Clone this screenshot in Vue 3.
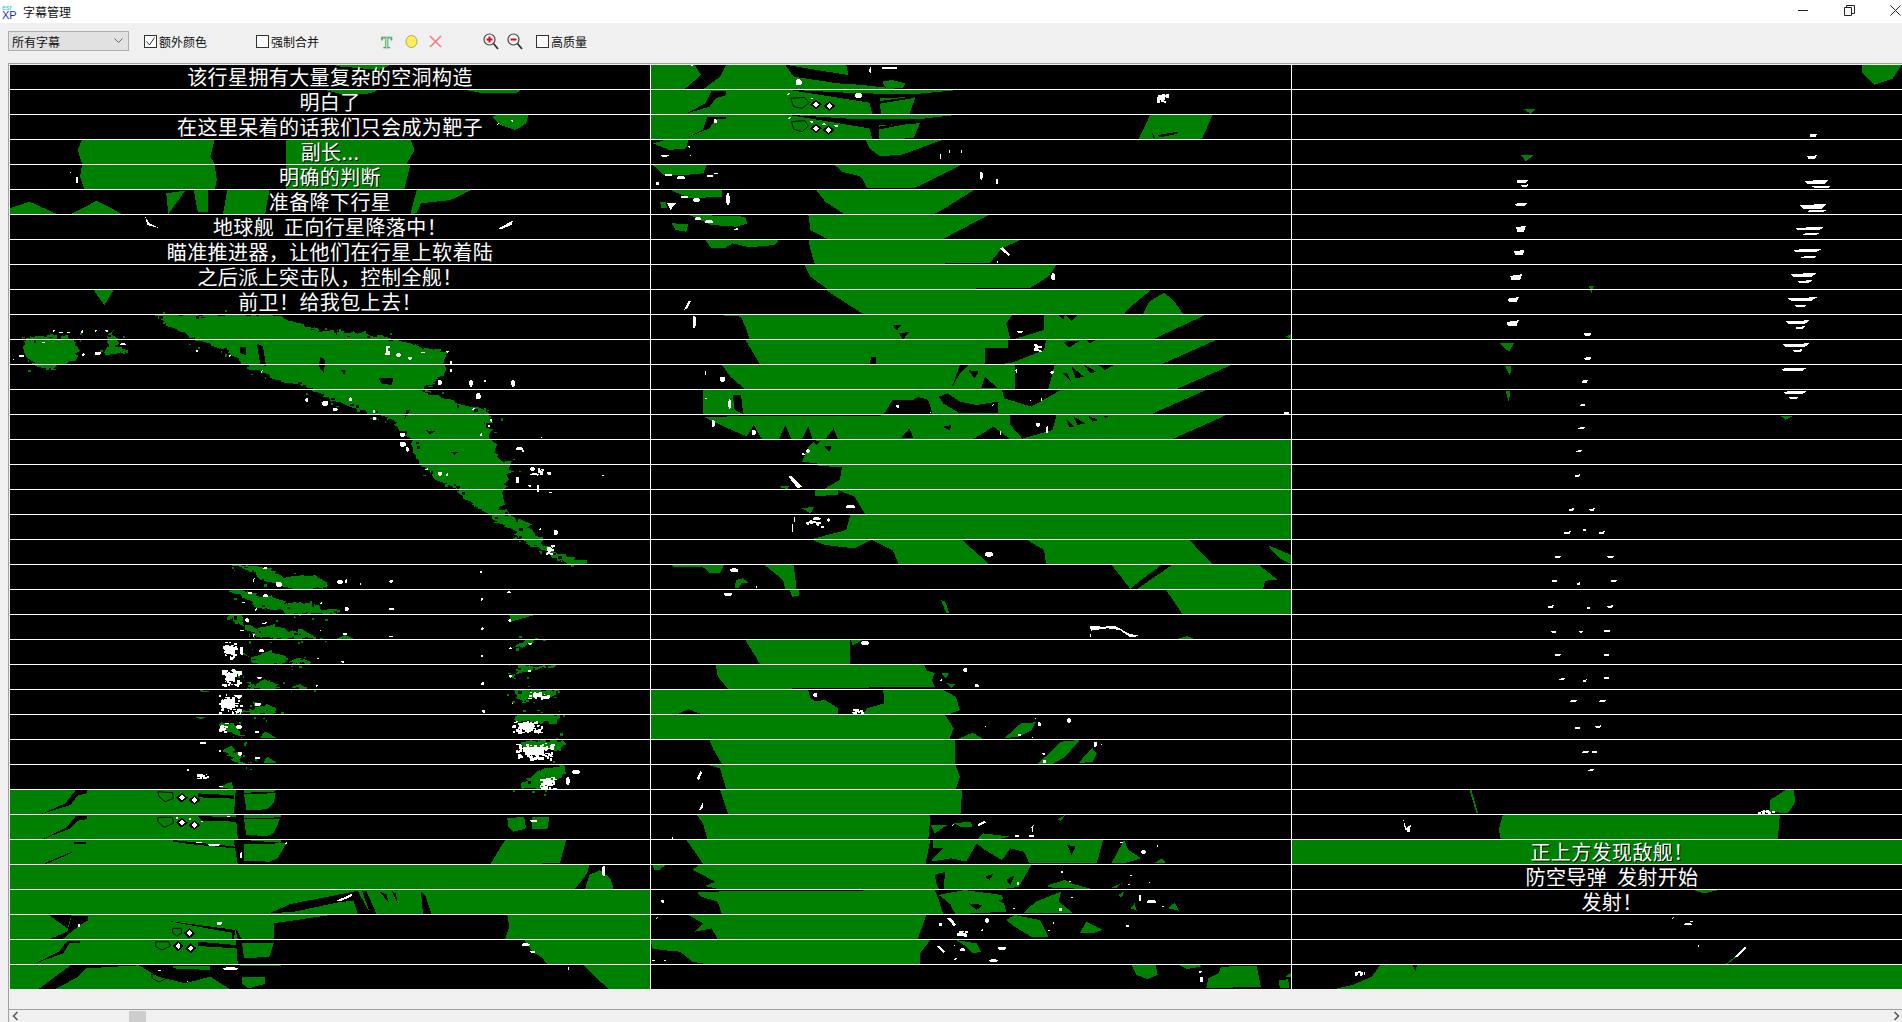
<script setup>
// every strip picture is traced from crops, so each block keeps the crop's own units
const SX = 660 / 1568
const SY = 1 / 3

const subtitles = {
  '0-0': '该行星拥有大量复杂的空洞构造',
  '0-1': '明白了',
  '0-2': '在这里呆着的话我们只会成为靶子',
  '0-3': '副长...',
  '0-4': '明确的判断',
  '0-5': '准备降下行星',
  '0-6': '地球舰  正向行星降落中！',
  '0-7': '瞄准推进器，让他们在行星上软着陆',
  '0-8': '之后派上突击队，控制全舰！',
  '0-9': '前卫！给我包上去！',
  '2-31': '正上方发现敌舰！',
  '2-32': '防空导弹  发射开始',
  '2-33': '发射！',
}

const cells = []
for (let col = 0; col < 3; col++) {
  for (let row = 0; row < 37; row++) {
    cells.push({ key: col + '-' + row, text: subtitles[col + '-' + row] || '', last: row === 36 })
  }
}

const rawRegions = [
  // left column, first ten strips
  {
    x: 0, y: 60, sx: SX, sy: SY,
    green: [
      '790,14 930,14 900,30 850,24 810,20',
      '770,89 900,89 880,100 820,105',
      '1100,89 1240,89 1225,100 1150,100',
      '1180,164 1255,164 1250,190 1225,210 1190,195 1170,170',
      '195,239 510,239 500,290 510,313 195,313 185,270',
      '680,239 975,239 985,270 965,313 680,313',
      '195,314 510,314 515,360 510,388 200,388 190,350',
      '680,314 975,314 960,388 680,388',
      '22,445 70,425 135,462 22,462',
      '170,462 230,422 290,462',
      '395,400 440,392 400,462',
      '460,389 495,389 495,455 470,455',
      '540,389 640,389 630,462 530,462',
      '975,462 990,390 1120,390 1070,420 1000,430 990,460',
      '222,690 270,690 248,735',
    ],
    white: [
      '345,470 355,490 380,505 350,495',
      '1185,505 1220,480 1215,495 1190,508',
    ],
    dots: [[1180, 190, 5, 5], [1215, 180, 5, 5], [165, 335, 5, 5], [180, 350, 6, 20], [125, 810, 5, 5], [160, 815, 8, 5]],
  },
  // left column, debris cloud
  {
    x: 0, y: 310, sx: SX, sy: SY,
    rough: [
      '360,15 650,15 750,60 860,70 930,85 1060,125 1060,190 1000,240 1100,285 1160,300 1165,380 1190,460 1225,450 1200,530 1190,600 1250,640 1290,690 1300,720 1380,750 1330,750 1250,695 1170,620 1130,590 1090,545 1000,470 970,380 930,330 880,310 800,280 730,230 650,205 590,170 540,120 470,95 420,60',
      '60,85 130,75 180,85 185,145 120,180 85,170 60,130',
      '265,60 300,130 250,135',
    ],
    black: [
      '900,205 935,205 930,225 905,220',
      '1010,360 1035,365 1020,372',
      '1070,425 1090,425 1080,435',
      '570,110 585,110 585,135 570,130',
      '610,100 625,110 632,170 618,160',
      '760,140 772,150 770,190 758,170',
      '810,180 822,182 818,195',
      '965,300 975,300 960,330',
    ],
    dots: [
      [140, 65, 10, 5], [192, 60, 5, 8], [225, 60, 5, 6], [250, 60, 8, 5], [285, 100, 14, 6], [225, 125, 15, 10], [195, 130, 6, 8],
      [45, 135, 12, 6], [30, 145, 4, 5], [100, 95, 8, 4], [915, 100, 10, 30], [940, 130, 12, 10], [970, 140, 8, 10], [1000, 125, 10, 5],
      [1060, 122, 6, 6], [1070, 150, 5, 15], [1070, 175, 4, 12], [1040, 210, 10, 15], [1115, 210, 8, 20], [1150, 210, 5, 6], [1215, 210, 8, 20],
      [1130, 250, 12, 18], [725, 265, 7, 10], [765, 272, 15, 15], [790, 295, 12, 8], [830, 262, 6, 12], [885, 300, 6, 8], [885, 320, 8, 10],
      [1165, 325, 5, 10], [1160, 345, 5, 5], [950, 368, 12, 12], [950, 395, 14, 15], [965, 410, 6, 15], [1140, 370, 5, 8], [1225, 412, 18, 8],
      [1240, 420, 5, 6], [1285, 380, 4, 4], [1260, 470, 10, 12], [1275, 475, 15, 20], [1300, 485, 10, 10], [1225, 500, 8, 20], [1260, 490, 20, 6],
      [1255, 525, 8, 5], [1275, 525, 6, 20], [1305, 545, 8, 5], [1040, 485, 10, 12], [1060, 490, 4, 8], [1010, 475, 8, 4], [1315, 660, 10, 14],
      [1295, 705, 20, 25], [1430, 495, 5, 3], [1280, 655, 5, 5], [465, 120, 6, 6], [545, 135, 3, 5], [620, 180, 4, 8], [1120, 295, 8, 4],
    ],
  },
  // left column, repeating engine flares
  {
    x: 0, y: 560, sx: SX, sy: SY,
    rough: [
      '555,15 600,15 650,28 680,50 740,45 780,70 770,86 680,86 660,65 615,60 610,40',
      '545,90 570,90 620,110 650,110 680,130 720,125 770,150 810,145 800,161 680,161 670,150 610,145 600,125',
      '540,168 570,168 610,210 645,190 680,215 720,210 750,236 670,236 610,230 580,200',
      '575,275 600,290 640,272 675,290 675,311 610,311',
      '680,311 710,292 740,311',
      '575,355 600,375 630,358 670,385 600,386',
      '680,386 710,375 735,386',
      '570,460 610,440 640,435 665,460',
      '520,490 550,490 590,535 540,515',
      '525,570 555,560 570,600 600,610 570,610',
      '1215,260 1250,240 1280,240 1240,260',
      '1210,350 1240,318 1325,318 1260,330',
      '1225,390 1330,390 1320,405 1260,415 1240,430 1225,415',
      '1225,465 1260,465 1330,465 1325,490 1290,485 1230,485',
      '1235,545 1285,540 1340,540 1340,570 1290,570 1245,565',
      '1245,670 1280,630 1340,615 1345,640 1300,680 1240,688',
    ],
    green: [
      '1335,0 1395,0 1395,12 1350,12',
      '800,236 820,225 840,236',
      '1210,165 1270,165 1215,185',
      '600,425 620,430 605,440',
      '475,390 500,395 480,396',
      '615,535 630,515 660,535',
      '460,470 490,470 480,478',
      '625,610 635,590 660,610',
      '520,682 550,665 555,688',
    ],
    dots: [
      [655, 65, 15, 15], [625, 22, 10, 6], [800, 60, 15, 12], [820, 55, 5, 15], [855, 68, 4, 8], [925, 60, 8, 8], [1140, 33, 6, 6], [600, 55, 5, 10],
      [590, 96, 8, 6], [625, 103, 12, 8], [575, 125, 8, 5], [605, 145, 5, 8], [820, 140, 8, 14], [925, 143, 10, 8], [1142, 113, 5, 10], [1205, 94, 8, 6], [760, 127, 5, 4],
      [583, 175, 8, 12], [622, 187, 12, 5], [570, 210, 10, 3], [600, 222, 5, 8], [815, 218, 10, 8], [925, 228, 10, 4], [1143, 202, 6, 8], [1208, 178, 6, 8], [760, 210, 4, 4],
      [530, 245, 30, 50], [570, 260, 8, 25], [615, 268, 12, 8], [750, 295, 8, 3], [810, 302, 8, 6], [1143, 285, 5, 5], [1210, 262, 6, 6], [1255, 248, 8, 6],
      [525, 325, 45, 50], [610, 350, 12, 6], [750, 375, 5, 6], [1143, 367, 8, 8], [1210, 345, 6, 8], [1255, 330, 6, 6],
      [520, 402, 50, 55], [605, 428, 15, 10], [1145, 450, 8, 8], [1255, 395, 45, 20], [1215, 430, 5, 3],
      [535, 488, 10, 5], [560, 495, 15, 12], [605, 512, 10, 8], [1215, 480, 70, 35], [520, 495, 15, 20],
      [475, 545, 15, 8], [565, 575, 10, 12], [605, 590, 12, 8], [520, 570, 6, 6], [1225, 550, 90, 45],
      [445, 625, 4, 8], [465, 640, 30, 15], [520, 678, 10, 4], [1280, 650, 40, 35], [1345, 650, 8, 25], [1360, 630, 18, 12],
    ],
  },
  // left column, hull strips
  {
    x: 0, y: 780, sx: SX, sy: SY,
    green: [
      '24,29 560,29 556,103 24,103',
      '580,42 655,40 650,70 635,88 585,90',
      '580,29 660,29 650,36 580,38',
      '24,104 560,104 565,178 24,178',
      '580,118 665,118 650,160 635,168 585,165',
      '580,104 670,104 665,112 580,115',
      '1205,115 1245,110 1250,145 1220,155 1208,140',
      '1265,110 1305,112 1300,148 1265,148',
      '24,179 555,179 565,253 24,253',
      '580,192 680,190 660,235 640,245 580,242',
      '570,179 670,179 665,188',
      '1200,180 1345,180 1330,250 1165,252',
      '24,254 1400,254 1395,280 1365,328 24,328',
      '1400,285 1425,270 1450,295 1458,328 1390,328',
      '1550,255 1568,255 1568,270 1555,270',
      '24,329 1545,329 1545,403 24,403',
      '24,404 115,404 160,445 170,404 460,404 650,430 650,478 24,478',
      '460,404 790,404 650,430 530,415',
      '1205,404 1545,404 1545,478 1200,478 1210,440',
      '24,479 560,479 565,553 24,553',
      '575,490 650,490 640,530 580,535',
      '1245,479 1545,479 1545,553 1300,553 1290,535 1265,515',
      '24,554 170,554 115,605 92,627 24,627',
      '205,565 330,556 375,590 440,610 500,590 545,627 130,627 180,595',
      '410,558 500,558 500,570 410,565',
      '570,554 680,554 660,558 570,558',
      '575,590 630,590 630,612 590,625 575,610',
      '1385,554 1445,627 1545,627 1545,554',
    ],
    black: [
      '100,101 155,70 180,30 208,30 205,42 185,45 168,75',
      '470,40 556,46 556,56 470,52',
      '105,176 160,140 180,108 208,108 205,118 185,122 168,145',
      '470,108 560,112 560,125 480,122',
      '105,250 170,215 172,218 110,252',
      '175,185 205,185 205,193 175,193',
      '410,180 560,200 560,205 470,195 410,185',
      '640,400 690,372 800,345 850,332 880,402 850,402 840,362 800,368 700,395',
      '860,332 870,332 895,403 880,403',
      '900,332 925,370 918,345',
      '930,332 945,370 940,340',
      '1000,335 1010,345 1025,403 1005,403',
      '120,476 160,455 170,408 210,408 210,420 185,440 150,476',
      '395,422 560,450 565,478 550,478 550,458 470,440',
      '85,550 140,515 160,482 190,482 190,488 165,490 150,520',
      '470,485 560,495 560,505 470,498',
      '555,478 575,478 575,478 560,445',
    ],
    rings: [
      '375,35 410,38 412,55 392,65 378,50',
      '375,112 410,112 412,130 390,142 375,125',
      '370,485 400,485 405,498 385,510 370,500',
      '360,582 390,582 395,595 378,606 362,595',
      '410,445 430,445 432,460 420,468 410,458',
    ],
    diamonds: [[432, 53], [462, 60], [432, 128], [462, 135], [450, 460], [423, 498], [453, 505]],
    white: ['800,362 835,342 838,348 805,365'],
    dots: [
      [418, 112, 6, 6], [448, 115, 6, 6], [478, 122, 6, 5], [540, 108, 8, 3], [1260, 120, 18, 5], [465, 186, 15, 4], [495, 192, 30, 5], [570, 215, 5, 20],
      [678, 186, 4, 6], [1430, 258, 8, 30], [515, 425, 12, 10], [185, 430, 5, 10], [1240, 490, 18, 8], [1260, 512, 12, 6], [530, 562, 35, 8], [375, 570, 8, 3],
      [445, 603, 3, 4], [1350, 560, 3, 10], [1558, 412, 4, 4], [1550, 540, 6, 4],
    ],
  },
  // middle column, first ten strips
  {
    x: 640, y: 60, sx: SX, sy: SY,
    green: [
      '27,14 130,14 145,45 105,88 27,88',
      '205,14 345,14 365,50 470,70 530,75 620,88 150,88 190,50',
      '345,14 490,14 495,45 420,30',
      '575,65 600,60 630,70 625,85 585,85',
      '27,89 350,89 545,128 552,162 27,162',
      '350,89 765,89 655,102 520,100',
      '570,115 655,110 640,162 572,162',
      '27,164 350,164 545,205 552,237 27,237',
      '350,164 755,164 660,178 520,178',
      '568,195 665,190 650,235 568,237',
      '1212,165 1360,165 1335,237 1185,237',
      '30,250 60,240 115,240 110,265 70,270',
      '535,239 720,239 620,285 570,288 545,265',
      '30,314 160,314 150,340 105,345 55,345',
      '462,314 765,314 700,355 650,385 540,385 525,350 480,335',
      '418,389 795,389 730,440 700,462 485,462 440,425',
      '70,389 195,389 195,410 120,415',
      '48,425 60,425 65,445 50,445',
      '400,464 830,464 760,510 720,537 445,537 405,510',
      '115,464 250,470 255,490 230,500 170,495',
      '75,490 115,492 110,515 85,510',
      '400,539 905,539 860,565 830,610 415,612 405,570',
      '155,540 330,540 320,555 260,562 220,550 200,565 170,565',
      '390,614 990,614 970,650 925,685 445,687 405,650',
      '440,689 1215,689 1170,735 1150,762 530,762',
      '1195,762 1210,725 1245,698 1270,725 1290,762',
    ],
    black: [
      '110,161 155,130 170,92 205,92 205,105 180,115 165,140',
      '108,235 150,208 160,170 205,170 205,178 180,178 165,205',
      '1215,215 1225,235 1220,235',
      '1230,225 1280,215 1275,222 1235,232',
      '545,128 655,108 650,114 552,135',
      '545,205 660,180 660,186 552,212',
    ],
    rings: [
      '358,115 390,112 402,128 385,145 365,140',
      '360,185 392,182 400,198 385,215 365,208',
    ],
    diamonds: [[418, 133], [450, 138], [418, 205], [448, 210]],
    white: ['65,430 85,430 72,450', '855,565 862,562 880,585 875,588', '115,722 122,722 112,745 105,750'],
    dots: [
      [370, 58, 14, 18], [575, 20, 35, 8], [545, 20, 4, 20], [120, 14, 6, 4], [348, 100, 8, 4], [405, 113, 6, 5], [510, 100, 18, 14], [1225, 100, 25, 25],
      [350, 172, 8, 4], [405, 183, 6, 5], [432, 190, 10, 6], [462, 195, 10, 5], [175, 178, 8, 12], [50, 284, 18, 6], [115, 257, 4, 6], [118, 283, 4, 6],
      [712, 280, 3, 18], [733, 268, 3, 12], [762, 268, 3, 12], [60, 342, 15, 6], [88, 348, 18, 10], [160, 345, 14, 6], [38, 366, 8, 10], [170, 340, 15, 3],
      [808, 335, 6, 25], [845, 358, 6, 14], [98, 408, 15, 6], [125, 415, 18, 10], [205, 400, 8, 35], [130, 472, 15, 8], [155, 480, 18, 10], [222, 505, 12, 4],
      [848, 603, 3, 5], [977, 640, 10, 20],
    ],
  },
  // middle column, big green band
  {
    x: 640, y: 310, sx: SX, sy: SY,
    green: [
      '170,14 240,20 250,50 260,87 880,87 870,40 885,14',
      '960,14 1345,14 1220,87 890,87 960,60',
      '1535,80 1548,70 1548,87',
      '250,89 875,89 875,115 820,115 820,163 285,163 265,120',
      '965,89 1370,89 1240,162 830,162 880,160 960,120',
      '195,165 890,165 890,238 250,238 215,200',
      '985,165 1405,165 1275,237 970,237',
      '150,240 860,240 865,265 930,290 1000,240 1345,240 1215,312 150,312',
      '150,320 880,314 880,345 910,388 270,388 200,350',
      '990,314 1395,314 1265,387 905,387 980,360',
      '420,389 1548,389 1548,462 430,462 385,455 400,410',
      '410,465 1548,465 1548,537 440,537 440,510 470,472',
      '325,530 355,528 350,537',
      '470,540 1548,540 1548,612 535,612 510,560 480,545',
      '415,540 470,540 470,555 415,558',
      '385,595 415,590 405,610',
      '500,614 1548,614 1548,687 410,687 430,680 490,660',
      '550,690 765,690 830,763 615,763 600,720',
      '410,690 550,690 510,715 440,705',
      '920,690 1305,690 1360,763 965,763 960,720',
      '1490,705 1548,735 1548,763 1520,745',
    ],
    black: [
      '995,14 1010,14 1005,30', '1010,14 1040,14 1025,32', '600,45 620,45 610,62', '615,70 640,66 625,88',
      '1005,95 1045,92 1020,112', '1060,90 1082,90 1068,100', '550,140 560,140 560,162 545,162',
      '740,235 760,190 780,165 760,165', '810,235 820,200 850,235', '780,180 805,185 795,205',
      '1005,190 1025,215 1015,190', '1025,170 1055,200 1035,205', '1055,165 1085,185 1070,190', '1090,165 1125,165 1105,180',
      '580,312 600,270 650,270 660,260 685,270 695,312', '710,260 730,250 760,275 800,285 850,275 850,310 760,310 720,280',
      '930,290 970,240 860,240 870,265', '220,255 240,255 245,312 225,300',
      '250,388 270,345 290,388', '330,388 345,345 360,388', '385,388 400,350 410,388', '440,388 460,355 470,388',
      '620,385 640,355 650,385', '720,350 740,345 735,362', '790,388 840,350 880,388',
      '1010,325 1032,350 1020,350', '1030,320 1058,340 1040,345', '1065,318 1090,330 1075,335', '1100,318 1115,318 1105,324',
      '410,392 430,392 420,405', '437,408 455,408 450,425', '420,475 480,470 475,510 440,535 415,510',
    ],
    white: ['352,500 360,498 385,530 375,535'],
    dots: [
      [125, 18, 8, 35], [895, 62, 15, 6], [935, 100, 14, 22], [190, 200, 12, 15], [155, 180, 3, 15], [975, 183, 8, 8], [892, 175, 4, 15],
      [210, 268, 6, 30], [155, 263, 5, 4], [608, 285, 8, 8], [835, 283, 5, 6], [925, 268, 5, 4], [953, 260, 3, 14], [690, 305, 2, 6],
      [940, 338, 10, 12], [965, 345, 4, 25], [265, 360, 10, 16], [170, 330, 8, 20], [855, 360, 3, 15], [395, 418, 8, 10], [385, 430, 6, 6],
      [490, 585, 20, 10], [395, 630, 30, 10], [410, 622, 20, 8], [445, 625, 6, 10], [430, 648, 8, 6], [360, 640, 3, 25], [365, 620, 3, 15],
      [820, 725, 18, 15], [1530, 305, 12, 8],
    ],
  },
  {
    x: 640, y: 560, sx: SX, sy: SY,
    green: [
      '75,14 200,14 190,38 165,38 150,22 80,22',
      '295,14 365,14 372,88 345,88 340,60',
      '225,85 228,60 245,55 258,70 240,70 235,85',
      '355,90 378,90 378,108 362,110',
      '1120,14 1240,14 1190,60 1165,86',
      '1265,14 1470,14 1515,60 1485,62 1480,88 1180,88',
      '715,120 725,125 735,160 728,160',
      '1250,90 1548,90 1548,161 1288,161',
      '1275,238 1300,228 1320,238',
      '250,240 500,240 498,313 285,312 270,280',
      '500,240 530,240 505,255',
      '180,315 675,315 700,380 210,388 185,350',
      '715,338 735,340 725,355',
      '730,370 750,372 740,385',
      '680,330 700,340 690,375',
      '25,390 400,390 405,415 470,462 145,462 115,448 90,462 25,462',
      '578,390 720,390 750,410 760,450 735,462 530,462 540,445 580,430',
      '405,425 440,420 470,445 470,462 420,450',
      '25,465 725,465 745,505 735,537 25,537',
      '755,537 790,518 815,537',
      '865,535 905,490 940,487 930,510 900,530',
      '165,540 748,540 748,612 195,612 175,570',
      '945,612 1000,545 1045,540 1010,590 980,612',
      '1040,610 1075,565 1085,580 1075,605',
      '165,616 750,616 760,650 750,688 205,688 190,625',
    ],
    white: ['1068,198 1100,200 1130,198 1160,220 1188,228 1165,232 1140,210 1110,205 1072,212', '135,655 145,630 147,640 140,660'],
    dots: [
      [215, 25, 18, 12], [275, 78, 4, 6], [200, 98, 18, 10], [1068, 222, 4, 10], [525, 243, 20, 12], [768, 325, 10, 10], [795, 372, 10, 10], [712, 358, 6, 4],
      [412, 398, 8, 14], [500, 445, 25, 12], [945, 487, 8, 12], [1015, 475, 8, 14], [898, 522, 6, 6], [930, 530, 5, 3], [938, 475, 3, 3], [820, 497, 3, 3],
      [1078, 545, 8, 15], [955, 578, 8, 6], [958, 600, 6, 10], [1095, 550, 3, 5],
    ],
  },
  {
    x: 640, y: 780, sx: SX, sy: SY,
    green: [
      '190,29 765,29 762,103 210,103',
      '135,105 690,105 685,178 160,178 150,130',
      '690,135 730,135 700,160',
      '745,130 785,125 790,140 760,140',
      '800,178 815,160 880,170 850,178',
      '990,120 1010,105 1000,122',
      '110,180 690,180 678,253 150,253 130,215',
      '695,180 1100,180 1085,250 925,250 912,215 880,205 860,240 820,210 800,190 775,245 740,235 690,245 720,205 695,205',
      '1120,250 1150,180 1160,210 1190,235 1150,250',
      '1220,250 1240,235 1250,250',
      '140,255 720,255 705,310 710,328 190,328 155,318 180,305 125,270',
      '720,255 930,255 900,320 860,328 725,328 700,290',
      '30,255 60,255 45,272',
      '970,315 1010,300 1030,312 1075,328 970,322',
      '1120,322 1145,310 1130,325',
      '135,335 700,330 710,360 720,403 195,403 185,365 145,350',
      '710,345 770,330 860,345 870,395 750,403 735,370',
      '910,400 940,365 1000,335 995,365 1030,400',
      '1165,385 1175,370 1180,392',
      '1255,385 1270,368 1280,392',
      '1135,345 1150,335 1145,352',
      '115,405 680,405 660,478 185,478 170,445 130,455 150,430',
      '870,420 890,405 950,420 970,470 930,470 890,440',
      '1045,460 1060,425 1100,450 1075,460',
      '25,480 690,480 665,520 665,552 155,552 125,545 95,515 50,510 30,505',
      '750,480 800,490 810,515 790,520 770,495',
      '1168,555 1225,555 1230,585 1205,597 1180,585',
      '1280,555 1345,557 1300,567',
      '1380,560 1465,558 1475,620 1345,625 1350,595 1375,580',
      '1518,600 1540,598 1542,625 1520,625',
      '1535,590 1548,575 1548,590',
    ],
    black: [
      '1015,195 1035,200 1025,225', '820,290 840,280 830,300', '870,300 890,285 880,315', '700,285 725,275 722,320 705,315',
      '780,370 815,375 800,390', '720,375 740,372 735,392', '850,360 880,355 870,375',
    ],
    white: ['140,90 150,65 150,80 143,92', '800,135 818,122 822,128 804,138', '730,415 738,414 752,435 745,438', '705,500 712,498 726,516 720,518'],
    dots: [
      [930, 135, 5, 20], [890, 165, 10, 6], [925, 165, 10, 6], [740, 133, 5, 4], [75, 172, 3, 5], [1190, 210, 12, 12], [1140, 185, 8, 5], [1228, 195, 3, 5],
      [1000, 272, 6, 8], [895, 305, 6, 10], [1020, 303, 5, 4], [1155, 313, 10, 3], [1208, 305, 3, 3], [1165, 285, 5, 3], [50, 360, 8, 8], [1205, 360, 20, 10],
      [1185, 345, 6, 18], [1020, 352, 8, 3], [995, 385, 8, 8], [880, 385, 12, 3], [1240, 378, 6, 4], [710, 430, 8, 8], [752, 450, 20, 15], [820, 415, 8, 14],
      [810, 448, 5, 6], [1155, 435, 6, 6], [980, 425, 4, 6], [970, 448, 5, 6], [38, 412, 4, 4], [745, 495, 4, 4], [760, 505, 12, 8], [850, 500, 20, 10],
      [830, 538, 20, 8], [745, 535, 8, 4], [30, 540, 6, 4], [58, 538, 5, 6], [1328, 572, 6, 6], [1330, 590, 8, 16],
    ],
  },
  // right column, lower strips
  {
    x: 1290, y: 780, sx: 612 / 1568, sy: SY,
    green: [
      '460,30 465,30 482,100 478,100',
      '1230,60 1270,30 1290,30 1295,65 1275,100 1230,95',
      '545,105 1255,105 1250,178 540,178 535,150',
      '5,180 1568,180 1568,253 5,253',
      '1035,330 1100,330 1060,340',
      '1115,553 1140,530 1143,532 1120,553',
      '230,556 1568,556 1568,627 115,627 160,615 210,590',
    ],
    black: ['315,556 325,556 322,575'],
    white: ['290,118 300,150 295,150', '1140,530 1165,500 1170,503 1145,533'],
    dots: [[1197, 90, 40, 8], [1010, 430, 20, 6], [1025, 422, 8, 5], [978, 412, 5, 4], [1045, 495, 3, 5], [160, 572, 30, 10]],
  },
  // right column, upper trails (read from the overview)
  {
    x: 0, y: 0, sx: 1902 / 1568, sy: 1902 / 1568,
    green: [
      '1535,53 1568,53 1560,65 1545,70 1535,60',
      '1236,283 1248,283 1244,290',
      '1241,302 1246,302 1245,310',
      '1241,322 1245,322 1244,332',
      '1468,343 1478,343 1472,346',
      '1256,90 1266,90 1262,94',
      '1254,128 1264,128 1258,133',
      '1310,236 1314,236 1312,242',
    ],
    dots: [
      [1250, 148, 10, 3], [1254, 152, 6, 2], [1249, 167, 10, 3], [1250, 186, 8, 5], [1248, 206, 9, 4], [1245, 226, 10, 5], [1243, 245, 9, 4], [1242, 264, 10, 5],
      [1492, 110, 6, 3], [1490, 128, 8, 3], [1488, 148, 20, 4], [1494, 153, 16, 2], [1484, 168, 22, 4], [1490, 173, 16, 2], [1480, 187, 24, 3], [1486, 192, 14, 2],
      [1478, 205, 24, 3], [1484, 211, 14, 2], [1476, 225, 22, 3], [1482, 231, 12, 2], [1474, 245, 24, 3], [1480, 251, 10, 2], [1472, 264, 20, 3], [1480, 269, 8, 2],
      [1470, 283, 22, 3], [1478, 288, 8, 2], [1468, 303, 22, 3], [1470, 322, 20, 3], [1475, 327, 8, 2],
      [1306, 274, 6, 3], [1306, 294, 6, 3], [1304, 313, 5, 3], [1302, 333, 5, 2], [1301, 352, 6, 2], [1299, 371, 5, 2], [1298, 391, 5, 2],
      [1293, 419, 5, 2], [1289, 438, 6, 2], [1282, 458, 5, 2], [1279, 478, 5, 2], [1276, 499, 5, 2], [1279, 520, 4, 2], [1282, 539, 5, 2], [1285, 559, 5, 2],
      [1294, 577, 6, 2], [1298, 599, 5, 2], [1304, 619, 6, 2], [1309, 634, 5, 2], [1310, 419, 5, 2], [1318, 438, 5, 2], [1325, 458, 6, 2], [1328, 478, 5, 2],
      [1325, 499, 5, 2], [1322, 519, 6, 2], [1322, 539, 5, 2], [1322, 558, 5, 2], [1318, 577, 6, 2], [1315, 598, 5, 2], [1312, 619, 5, 2], [1305, 436, 3, 2],
      [1300, 480, 3, 2], [1308, 500, 3, 2], [1302, 520, 3, 2], [1305, 560, 3, 2], [1160, 680, 3, 6],
    ],
  },
]

// small seeded generator so the ragged edges stay the same between runs
let seed = 20240611
function random() {
  seed = (seed * 1664525 + 1013904223) % 4294967296
  return seed / 4294967296
}

function toPoints(text) {
  return text.split(' ').map((p) => p.split(',').map(Number))
}

function toPath(points) {
  return 'M' + points.map((p) => p[0].toFixed(1) + ' ' + p[1].toFixed(1)).join('L') + 'Z'
}

function box(x, y, w, h) {
  return toPath([[x, y], [x + w, y], [x + w, y + h], [x, y + h]])
}

function ragged(points, step = 9, amount = 9) {
  const out = []
  points.forEach((a, i) => {
    const b = points[(i + 1) % points.length]
    const count = Math.max(1, Math.round(Math.hypot(b[0] - a[0], b[1] - a[1]) / step))
    for (let k = 0; k < count; k++) {
      const t = k / count
      out.push([
        a[0] + (b[0] - a[0]) * t + (random() - 0.5) * amount * 2,
        a[1] + (b[1] - a[1]) * t + (random() - 0.5) * amount,
      ])
    }
  })
  return out
}

function joinPaths(list) {
  return (list || []).map((text) => toPath(toPoints(text))).join('')
}

// big dots are speckle clusters in the reference, thin ones are tapered marks
function speck([x, y, w, h]) {
  if (w * h > 280) {
    let out = box(x + w * 0.25, y + h * 0.25, w * 0.5, h * 0.5)
    const count = Math.round((w * h) / 45) + 3
    for (let i = 0; i < count; i++) {
      out += box(x + random() * w, y + random() * h, 3 + random() * 5, 3 + random() * 6)
    }
    return out
  }
  if (Math.min(w, h) >= 6) {
    const cx = w * 0.25
    const cy = h * 0.25
    return toPath([[x + cx, y], [x + w - cx, y], [x + w, y + cy], [x + w, y + h - cy], [x + w - cx, y + h], [x + cx, y + h], [x, y + h - cy], [x, y + cy]])
  }
  return toPath([[x, y + h * 0.3], [x + w, y], [x + w * 0.8, y + h], [x + w * 0.1, y + h]])
}

const regions = rawRegions.map((r) => {
  const diamonds = r.diamonds || []
  let greenNoise = ''
  let blackNoise = ''
  const roughPaths = (r.rough || []).map((text) => {
    const pts = ragged(toPoints(text))
    pts.forEach(([x, y]) => {
      if (random() < 0.3) greenNoise += box(x + (random() - 0.5) * 50, y + (random() - 0.5) * 36, 3 + random() * 5, 3 + random() * 5)
      if (random() < 0.25) blackNoise += box(x + (random() - 0.5) * 24, y + (random() - 0.5) * 20, 3 + random() * 7, 3 + random() * 8)
    })
    return toPath(pts)
  })
  return {
    transform: `translate(${r.x} ${r.y}) scale(${r.sx} ${r.sy})`,
    green: roughPaths.join('') + joinPaths(r.green) + greenNoise,
    black: blackNoise + joinPaths(r.black) + diamonds.map(([x, y]) => toPath([[x, y - 15], [x + 14, y], [x, y + 15], [x - 14, y]])).join(''),
    rings: joinPaths(r.rings),
    white:
      joinPaths(r.white) +
      (r.dots || []).map(speck).join('') +
      diamonds.map(([x, y]) => toPath([[x, y - 9], [x + 7, y], [x, y + 9], [x - 7, y]])).join(''),
  }
})
</script>

<template>
  <div class="window">
    <header class="titlebar">
      <svg class="app-icon" width="16" height="16" viewBox="0 0 16 16">
        <text x="0" y="5.5" class="app-icon-top">esr</text>
        <text x="0" y="15" class="app-icon-bottom">XP</text>
      </svg>
      <span class="title">字幕管理</span>
      <div class="window-buttons">
        <svg width="11" height="11" viewBox="0 0 11 11"><path d="M0 5.5H10" stroke="#222" fill="none" /></svg>
        <svg width="11" height="11" viewBox="0 0 11 11">
          <path d="M0.5 2.5H7.5V10.5H0.5ZM2.5 2.5V0.5H10.5V8.5H7.5" stroke="#222" fill="none" />
        </svg>
        <svg width="11" height="11" viewBox="0 0 11 11"><path d="M0.5 0.5L10.5 10.5M10.5 0.5L0.5 10.5" stroke="#222" fill="none" /></svg>
      </div>
    </header>

    <div class="toolbar">
      <div class="combo">
        <span>所有字幕</span>
        <svg width="9" height="6" viewBox="0 0 9 6"><path d="M0.5 0.5L4.5 4.5L8.5 0.5" stroke="#666" fill="none" /></svg>
      </div>

      <label class="check check-color">
        <span class="box">
          <svg width="11" height="11" viewBox="0 0 11 11"><path d="M1.5 5.5L4.5 9L9.5 1.5" stroke="#333" fill="none" /></svg>
        </span>
        额外颜色
      </label>
      <label class="check check-merge"><span class="box"></span>强制合并</label>

      <div class="tool-icons tools-edit">
        <svg width="15" height="17" viewBox="0 0 15 17">
          <text x="7.5" y="15" class="t-icon">T</text>
        </svg>
        <svg width="15" height="15" viewBox="0 0 15 15">
          <ellipse cx="7.5" cy="7.5" rx="5.5" ry="6" fill="#ffee55" stroke="#a9a860" />
        </svg>
        <svg width="13" height="13" viewBox="0 0 13 13">
          <path d="M1 1L12 12M12 1L1 12" stroke="#f07f7f" stroke-width="1.6" fill="none" />
        </svg>
      </div>

      <div class="tool-icons tools-zoom">
        <svg width="16" height="17" viewBox="0 0 16 17">
          <circle cx="6.5" cy="6.5" r="5.5" fill="#f4f4f4" stroke="#444" stroke-width="1.2" />
          <path d="M3.5 6.5H9.5M6.5 3.5V9.5" stroke="#d01020" stroke-width="2" fill="none" />
          <path d="M10.5 10.5L15 16" stroke="#333" stroke-width="1.8" fill="none" />
        </svg>
        <svg width="16" height="17" viewBox="0 0 16 17">
          <circle cx="6.5" cy="6.5" r="5.5" fill="#f4f4f4" stroke="#444" stroke-width="1.2" />
          <path d="M3.5 6.5H9.5" stroke="#d01020" stroke-width="2" fill="none" />
          <path d="M10.5 10.5L15 16" stroke="#333" stroke-width="1.8" fill="none" />
        </svg>
      </div>

      <label class="check check-quality"><span class="box"></span>高质量</label>
    </div>

    <div class="viewport">
      <div class="strips-wrap">
        <div class="strips">
          <svg class="picture" width="1923" height="924" viewBox="10 65 1923 924" shape-rendering="crispEdges">
            <g v-for="(r, i) in regions" :key="i" :transform="r.transform">
              <path :d="r.green" fill="#008000" />
              <path :d="r.black" fill="#000" />
              <path :d="r.rings" fill="none" stroke="#000" stroke-width="1" vector-effect="non-scaling-stroke" />
              <path :d="r.white" fill="#fff" />
            </g>
          </svg>
          <div v-for="cell in cells" :key="cell.key" class="strip" :class="{ last: cell.last }">{{ cell.text }}</div>
        </div>
      </div>

      <div class="hscroll">
        <svg class="arrow" width="7" height="10" viewBox="0 0 7 10"><path d="M5.5 1L1.5 5L5.5 9" stroke="#555" stroke-width="1.5" fill="none" /></svg>
        <div class="thumb"></div>
        <svg class="arrow arrow-right" width="7" height="10" viewBox="0 0 7 10"><path d="M1.5 1L5.5 5L1.5 9" stroke="#555" stroke-width="1.5" fill="none" /></svg>
      </div>
    </div>
  </div>
</template>

<style scoped>
.window {
  height: 1022px;
  display: flex;
  flex-direction: column;
  background: #f0f0f0;
  overflow: hidden;
  font-family: "Noto Sans CJK SC", "Liberation Sans", sans-serif;
  font-size: 12px;
  color: #111;
}

.titlebar {
  height: 23px;
  flex: none;
  display: flex;
  align-items: center;
  background: #fff;
  padding-left: 2px;
}

.app-icon-top {
  font: 7px "Liberation Sans", sans-serif;
  fill: #19c3d8;
}

.app-icon-bottom {
  font: 11px "Liberation Sans", sans-serif;
  fill: #1c2fd0;
}

.title {
  margin-left: 5px;
}

.window-buttons {
  margin-left: auto;
  display: flex;
  gap: 35px;
  padding-right: 1px;
  height: 11px;
  margin-top: -2px;
}

.toolbar {
  height: 40px;
  box-sizing: border-box;
  flex: none;
  display: flex;
  align-items: center;
  padding: 0 0 4px 8px;
}

.combo {
  width: 121px;
  height: 20px;
  box-sizing: border-box;
  display: flex;
  align-items: center;
  justify-content: space-between;
  padding: 0 5px 0 3px;
  background: #e1e1e1;
  border: 1px solid #adadad;
}

.check {
  display: flex;
  align-items: center;
  gap: 2px;
  white-space: nowrap;
}

.box {
  width: 13px;
  height: 13px;
  box-sizing: border-box;
  border: 1px solid #333;
  background: #fff;
  display: flex;
  align-items: center;
  justify-content: center;
}

.check-color {
  margin-left: 15px;
}

.check-merge {
  margin-left: 49px;
}

.tool-icons {
  display: flex;
  align-items: center;
}

.tools-edit {
  margin-left: 60px;
  gap: 10px;
}

.tools-zoom {
  margin-left: 41px;
  gap: 8px;
}

.check-quality {
  margin-left: 13px;
}

.t-icon {
  font: bold 16px "Liberation Serif", serif;
  text-anchor: middle;
  fill: #b6e6c0;
  stroke: #3f9a60;
  stroke-width: 0.7px;
}

.viewport {
  flex: 1;
  min-height: 0;
  margin-left: 8px;
  border-left: 1px solid #a0a0a0;
  border-top: 1px solid #a0a0a0;
  display: flex;
  flex-direction: column;
}

.strips-wrap {
  flex: 1;
  min-height: 0;
  overflow: hidden;
  padding: 1px 0 0 1px;
}

.strips {
  position: relative;
  width: 1923px;
  display: grid;
  grid-template-columns: repeat(3, 641px);
  grid-template-rows: repeat(36, 25px) 24px;
  grid-auto-flow: column;
  background: #000;
}

.picture {
  position: absolute;
  left: 0;
  top: 0;
}

.strip {
  position: relative;
  box-sizing: border-box;
  border-bottom: 1px solid #fff;
  border-right: 1px solid #fff;
  color: #fff;
  font-size: 20px;
  letter-spacing: 0.4px;
  line-height: 24px;
  text-align: center;
  white-space: pre;
  text-shadow: 1px 1px 0 #000;
}

.strip.last {
  border-bottom: none;
}

.hscroll {
  height: 12px;
  flex: none;
  border-top: 1px solid #a0a0a0;
  display: flex;
  align-items: center;
  position: relative;
  padding-left: 3px;
}

.thumb {
  position: absolute;
  left: 120px;
  top: 1px;
  width: 17px;
  height: 11px;
  background: #cdcdcd;
}

.arrow-right {
  margin-left: auto;
  margin-right: 2px;
}
</style>

<style>
html,
body {
  margin: 0;
  overflow: hidden;
}
</style>
